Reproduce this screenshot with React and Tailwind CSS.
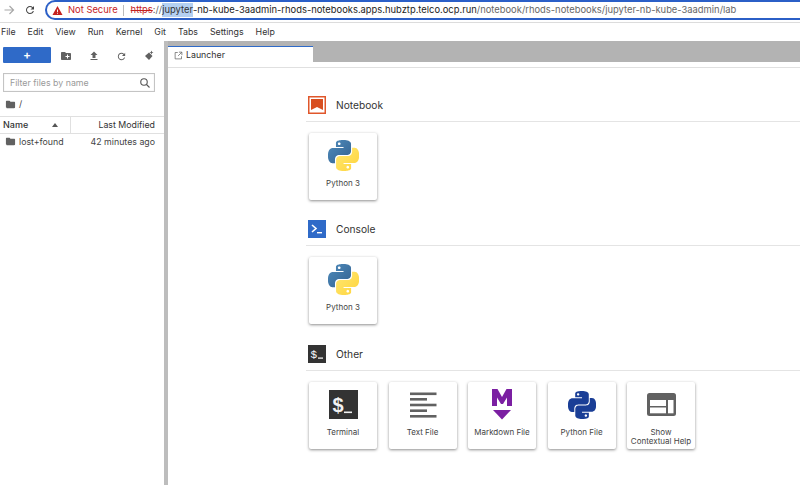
import React from "react";

const F = { fontFamily: "Inter, 'Liberation Sans', sans-serif" };

const PY_TOP = "M14.25.18l.9.2.73.26.59.3.45.32.34.34.25.34.16.33.1.3.04.26.02.2-.01.13V8.5l-.05.63-.13.55-.21.46-.26.38-.3.31-.33.25-.35.19-.35.14-.33.1-.3.07-.26.04-.21.02H8.77l-.69.05-.59.14-.5.22-.41.27-.33.32-.27.35-.2.36-.15.37-.1.35-.07.32-.04.27-.02.21v3.06H3.17l-.21-.03-.28-.07-.32-.12-.35-.18-.36-.26-.36-.36-.35-.46-.32-.59-.28-.73-.21-.88-.14-1.05-.05-1.23.06-1.22.16-1.04.24-.87.32-.71.36-.57.4-.44.42-.33.42-.24.4-.16.36-.1.32-.05.24-.01h.16l.06.01h8.16v-.83H6.18l-.01-2.75-.02-.37.05-.34.11-.31.17-.28.25-.26.31-.23.38-.2.44-.18.51-.15.58-.12.64-.1.71-.06.77-.04.84-.02 1.27.05zm-6.3 1.98l-.23.33-.08.41.08.41.23.34.33.22.41.09.41-.09.33-.22.23-.34.08-.41-.08-.41-.23-.33-.33-.22-.41-.09-.41.09z";
const PY_BOT = "M21.1 6.11l.28.06.32.12.35.18.36.27.36.35.35.47.32.59.28.73.21.88.14 1.04.05 1.23-.06 1.23-.16 1.04-.24.86-.32.71-.36.57-.4.45-.42.33-.42.24-.4.16-.36.09-.32.05-.24.02-.16-.01h-8.22v.82h5.84l.01 2.76.02.36-.05.34-.11.31-.17.29-.25.25-.31.24-.38.2-.44.17-.51.15-.58.13-.64.09-.71.07-.77.04-.84.01-1.27-.04-1.07-.14-.9-.2-.73-.25-.59-.3-.45-.33-.34-.34-.25-.34-.16-.33-.1-.3-.04-.25-.02-.2.01-.13v-5.34l.05-.64.13-.54.21-.46.26-.38.3-.32.33-.24.35-.2.35-.14.33-.1.3-.06.26-.04.21-.02.13-.01h5.84l.69-.05.59-.14.5-.21.41-.28.33-.32.27-.35.2-.36.15-.36.1-.35.07-.32.04-.28.02-.21V6.07h2.09l.14.01zm-6.53 14.22l-.23.33-.08.41.08.41.23.33.33.23.41.08.41-.08.33-.23.23-.33.08-.41-.08-.41-.23-.33-.33-.23-.41-.08-.41.08z";

function Mi({ d, size = 12, color = "#616161" }) {
  return (
    <svg width={size} height={size} viewBox="0 0 24 24" fill={color} className="shrink-0">
      <path d={d} />
    </svg>
  );
}
const FOLDER = "M10 4H4c-1.1 0-2 .9-2 2v12c0 1.1.9 2 2 2h16c1.1 0 2-.9 2-2V8c0-1.1-.9-2-2-2h-8l-2-2z";
const NEWFOLDER = "M20 6h-8l-2-2H4c-1.1 0-1.99.9-1.99 2L2 18c0 1.1.9 2 2 2h16c1.1 0 2-.9 2-2V8c0-1.1-.9-2-2-2zm-1 8h-3v3h-2v-3h-3v-2h3V9h2v3h3v2z";
const UPLOAD = "M9 16h6v-6h4l-7-7-7 7h4v6zm-4 2h14v2H5v-2z";
const REFRESH = "M17.65 6.35C16.2 4.9 14.21 4 12 4c-4.42 0-7.99 3.58-7.99 8s3.57 8 7.99 8c3.73 0 6.84-2.55 7.73-6h-2.08c-.82 2.33-3.04 4-5.65 4-3.31 0-6-2.69-6-6s2.69-6 6-6c1.66 0 3.14.69 4.22 1.78L13 11h7V4l-2.35 2.35z";

function PythonColor() {
  return (
    <svg width="31" height="31" viewBox="0 0 24 24">
      <defs>
        <linearGradient id="pyb" x1="0" y1="0" x2="1" y2="1">
          <stop offset="0" stopColor="#4f8cbd" />
          <stop offset="1" stopColor="#33618f" />
        </linearGradient>
        <linearGradient id="pyy" x1="0" y1="0" x2="1" y2="1">
          <stop offset="0" stopColor="#ffe873" />
          <stop offset="1" stopColor="#ffd43b" />
        </linearGradient>
      </defs>
      <path d={PY_TOP} fill="url(#pyb)" />
      <path d={PY_BOT} fill="url(#pyy)" />
    </svg>
  );
}
function PythonFile() {
  return (
    <svg width="28" height="28" viewBox="0 0 24 24" fill="#1a3e96">
      <path d={PY_TOP} />
      <path d={PY_BOT} />
    </svg>
  );
}
function TerminalBig() {
  return (
    <svg width="29" height="29" viewBox="0 0 29 29">
      <rect width="29" height="29" fill="#333333" />
      <text x="3.5" y="22" fontSize="20" fontWeight="700" fill="#f2f2f2" fontFamily="Liberation Sans, sans-serif">$</text>
      <rect x="15" y="21.5" width="8" height="1.6" fill="#f2f2f2" />
    </svg>
  );
}
function TextFile() {
  return (
    <svg width="28" height="26" viewBox="0 0 28 26" fill="#616161">
      <rect x="1" y="0.5" width="26.5" height="2.6" />
      <rect x="1" y="6" width="17" height="2.6" />
      <rect x="1" y="11.7" width="26.5" height="2.6" />
      <rect x="1" y="17.4" width="17" height="2.6" />
      <rect x="1" y="23" width="26.5" height="2.6" />
    </svg>
  );
}
function Markdown() {
  return (
    <svg width="20" height="31" viewBox="0 0 20 31" fill="#7b1fa2">
      <path d="M0 17V0h5.5L10 8l4.5-8H20v17h-5V8.5l-4 6.5H9L5 8.5V17z" />
      <path d="M1 21h18l-9 9.5z" />
    </svg>
  );
}
function HelpIcon() {
  return (
    <svg width="29" height="23" viewBox="0 0 29 23">
      <rect x="0" y="0" width="29" height="23" rx="2.5" fill="#616161" />
      <rect x="3" y="7" width="16" height="6" fill="#fff" />
      <rect x="3" y="14.5" width="16" height="5.8" fill="#fff" />
      <rect x="21" y="7" width="5.5" height="13.3" fill="#fff" />
    </svg>
  );
}

function Card({ icon, label, two }) {
  return (
    <div className="w-[68px] h-[67px] bg-white rounded-[2px] flex flex-col items-center shadow-[0_1px_3px_rgba(0,0,0,0.45)] shrink-0">
      <div className="h-[45px] flex items-center justify-center shrink-0">{icon}</div>
      <div className={"text-[8px] text-center text-[#444] whitespace-nowrap " + (two ? "leading-[9px] mt-[1px]" : "leading-[10px]")}>{label}</div>
    </div>
  );
}

function Section({ icon, title, children, top }) {
  return (
    <div className={top}>
      <div className="flex items-center h-[18px] pl-[2px] gap-[10px] text-[10.2px] text-[#333]">
        {icon}
        <span className="pt-[2px]">{title}</span>
      </div>
      <div className="mt-[7px] h-[1px] bg-[#e4e4e4]" />
      <div className="mt-[11px] pl-[3px] flex gap-[11.5px]">{children}</div>
    </div>
  );
}

export default function App() {
  return (
    <div className="w-[800px] h-[485px] overflow-hidden bg-white flex flex-col" style={F}>
      {/* browser chrome */}
      <div className="h-[23px] shrink-0 border-b border-[#dcdcdc] flex items-start overflow-hidden">
        <div className="w-[45px] h-[20px] flex items-center shrink-0">
          <svg width="12" height="12" viewBox="0 0 24 24" fill="none" stroke="#a8a8a8" strokeWidth="2.4" className="ml-[3px]">
            <path d="M3 12h18M13 4l8 8-8 8" />
          </svg>
          <svg width="12" height="12" viewBox="0 0 24 24" fill="#444" className="ml-[9px]">
            <path d={REFRESH} />
          </svg>
        </div>
        <div className="flex-1 h-[20px] border-2 border-r-0 border-[#2b5fc7] rounded-l-[10px] flex items-center pl-[5px] text-[9.4px] whitespace-nowrap overflow-hidden">
          <svg width="11" height="11" viewBox="0 0 24 24" fill="#c5221f" className="shrink-0">
            <path d="M1 22h22L12 2 1 22zm12-3h-2v-2h2v2zm0-4h-2v-5h2v5z" />
          </svg>
          <span className="ml-[5px] text-[#c5221f]">Not Secure</span>
          <span className="ml-[5px] w-[1px] h-[11px] bg-[#bbb]" />
          <span className="ml-[7px] text-[#c5221f] line-through">https</span>
          <span className="text-[#666]">://</span>
          <span className="bg-[#b4d0f2] text-[#333]">jupyter</span>
          <span className="text-[#222]">-nb-kube-3aadmin-rhods-notebooks.apps.hubztp.telco.ocp.run</span>
          <span className="text-[#666]">/notebook/rhods-notebooks/jupyter-nb-kube-3aadmin/lab</span>
        </div>
      </div>

      {/* menu */}
      <div className="h-[18px] shrink-0 flex items-center pl-[1px] text-[8.8px] text-[#333] gap-[12px]">
        {["File", "Edit", "View", "Run", "Kernel", "Git", "Tabs", "Settings", "Help"].map((m) => (
          <span key={m}>{m}</span>
        ))}
      </div>

      <div className="flex-1 flex min-h-0">
        {/* sidebar */}
        <div className="w-[164px] shrink-0 flex flex-col text-[8.8px] text-[#444]">
          <div className="h-[16px] mt-[6px] flex items-center pl-[3px]">
            <div className="w-[48px] h-[16px] bg-[#2f6ac8] rounded-[1px] text-white flex items-center justify-center text-[12px] font-semibold">+</div>
            <div className="ml-[9px] pt-[2px]"><Mi d={NEWFOLDER} size={12} /></div>
            <div className="ml-[16px] pt-[2px]"><Mi d={UPLOAD} size={12} /></div>
            <div className="ml-[16px] pt-[2px]"><Mi d={REFRESH} size={11} /></div>
            <div className="ml-[16px] pt-[2px]">
              <svg width="12" height="12" viewBox="0 0 24 24" fill="#616161">
                <path d="M12 5l7 7-7 8-8-8z" />
                <path d="M17 1l1.2 2.8L21 5l-2.8 1.2L17 9l-1.2-2.8L13 5l2.8-1.2z" />
              </svg>
            </div>
          </div>
          <div className="mt-[10px] mx-[3px] w-[152px] h-[19px] border border-[#c4c4c4] shadow-[inset_0_0_1px_rgba(0,0,0,0.2)] flex items-center justify-between pl-[6px] pr-[3px] text-[#9a9a9a]">
            <span>Filter files by name</span>
            <svg width="12" height="12" viewBox="0 0 24 24" fill="none" stroke="#555" strokeWidth="2.2">
              <circle cx="10" cy="10" r="6.5" />
              <path d="M15 15l6 6" />
            </svg>
          </div>
          <div className="h-[12px] mt-[6px] flex items-center pl-[5px] gap-[3px]">
            <Mi d={FOLDER} size={11} />
            <span>/</span>
          </div>
          <div className="mt-[6px] h-[18px] border-y border-[#e0e0e0] flex items-center text-[#333]">
            <div className="w-[71px] h-full flex items-center justify-between pl-[3px] pr-[12px] border-r border-[#e0e0e0] font-medium text-[9px]">
              <span>Name</span>
              <svg width="6" height="4" viewBox="0 0 6 4" fill="#555"><path d="M0 4l3-4 3 4z" /></svg>
            </div>
            <div className="flex-1 text-right pr-[9px]">Last Modified</div>
          </div>
          <div className="h-[15px] flex items-center justify-between pl-[5px] pr-[9px]">
            <div className="flex items-center gap-[3px]">
              <Mi d={FOLDER} size={11} />
              <span>lost+found</span>
            </div>
            <span>42 minutes ago</span>
          </div>
        </div>

        {/* splitter */}
        <div className="w-[4px] shrink-0 bg-[#bdbdbd]" />

        {/* main */}
        <div className="flex-1 min-w-0 flex flex-col">
          <div className="h-[21px] shrink-0 bg-[#b3b3b3] pt-[5px]">
            <div className="w-[145px] h-[16px] bg-white border-t border-[#2f6ac8] flex items-center pl-[6px] pt-[1px] gap-[3px] text-[8.8px] text-[#333]">
              <svg width="9" height="9" viewBox="0 0 24 24" fill="none" stroke="#666" strokeWidth="2">
                <path d="M10 4H3v17h17v-7M13 3h8v8M21 3L11 13" />
              </svg>
              <span>Launcher</span>
            </div>
          </div>
          <div className="h-[6px] shrink-0 bg-white border-b border-[#e0e0e0]" />
          <div className="pl-[138px] flex-1 min-h-0">
            <Section
              top="mt-[28px]"
              title="Notebook"
              icon={
                <svg width="18" height="18" viewBox="0 0 18 18">
                  <rect x="0.75" y="0.75" width="16.5" height="16.5" fill="#fff" stroke="#e0572b" strokeWidth="1.5" />
                  <path d="M3 3h12v11l-6-3-6 3z" fill="#d84e1f" />
                </svg>
              }
            >
              <Card icon={<PythonColor />} label="Python 3" />
            </Section>
            <Section
              top="mt-[20px]"
              title="Console"
              icon={
                <svg width="18" height="18" viewBox="0 0 18 18">
                  <rect width="18" height="18" fill="#2f6ac8" />
                  <path d="M4 5l4 3.5L4 12" fill="none" stroke="#fff" strokeWidth="1.6" />
                  <rect x="9" y="12" width="5" height="1.4" fill="#fff" />
                </svg>
              }
            >
              <Card icon={<PythonColor />} label="Python 3" />
            </Section>
            <Section
              top="mt-[21px]"
              title="Other"
              icon={
                <svg width="18" height="18" viewBox="0 0 18 18">
                  <rect width="18" height="18" fill="#333" />
                  <text x="2.5" y="13" fontSize="11" fill="#fff" fontFamily="Liberation Mono, monospace">$</text>
                  <rect x="10" y="12.5" width="5" height="1.2" fill="#fff" />
                </svg>
              }
            >
              <Card icon={<TerminalBig />} label="Terminal" />
              <Card icon={<TextFile />} label="Text File" />
              <Card icon={<Markdown />} label="Markdown File" />
              <Card icon={<PythonFile />} label="Python File" />
              <Card icon={<HelpIcon />} two label={<>Show<br />Contextual Help</>} />
            </Section>
          </div>
        </div>
      </div>
    </div>
  );
}
